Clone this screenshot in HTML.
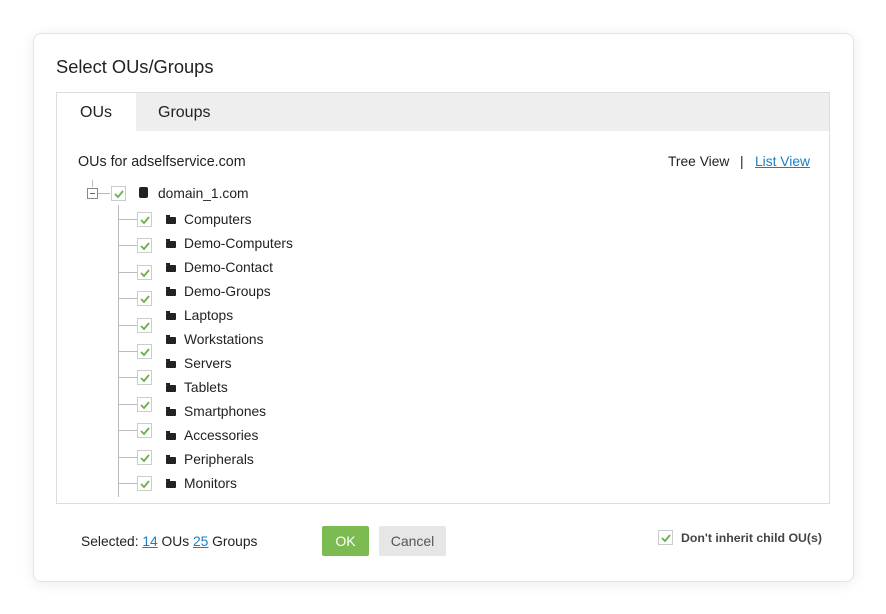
<!DOCTYPE html>
<html><head><meta charset="utf-8"><style>
body{margin:0;width:886px;height:614px;background:#fff;font-family:"Liberation Sans",sans-serif;color:#222;position:relative;overflow:hidden}
.card{position:absolute;left:33px;top:33px;width:819px;height:547px;border:1px solid #e4e4e4;border-radius:8px;box-shadow:0 2px 14px rgba(0,0,0,.08);background:#fff}
.a{position:absolute}
.cb{position:absolute;width:13px;height:13px;border:1px solid #ccc;background:#fff}
.cb svg{position:absolute;left:1px;top:1px}
.t{position:absolute;font-size:13.8px;line-height:16px;white-space:nowrap}
.f{position:absolute;width:10px;height:7px;background:#222;border-radius:1px}
.f:before{content:"";position:absolute;left:0;top:-2px;width:4px;height:2px;background:#222}
.h{position:absolute;height:1px;background:#bbb}
</style></head><body>
<div class="card"></div>
<div class="t" style="left:56px;top:57px;font-size:18.3px;line-height:20px">Select OUs/Groups</div>
<div class="a" style="left:56px;top:92px;width:772px;height:410px;border:1px solid #ddd"></div>
<div class="a" style="left:57px;top:93px;width:772px;height:38px;background:#eeeeef"></div>
<div class="a" style="left:57px;top:93px;width:79px;height:39px;background:#fff"></div>
<div class="t" style="left:80px;top:104px;font-size:16px;line-height:18px">OUs</div>
<div class="t" style="left:158px;top:104px;font-size:16px;line-height:18px">Groups</div>
<div class="t" style="left:78px;top:154px;font-size:14.3px">OUs for adselfservice.com</div>
<div class="t" style="left:668px;top:154px">Tree View</div>
<div class="t" style="left:740px;top:154px">|</div>
<div class="t" style="left:755px;top:154px;color:#1a7fc1;text-decoration:underline">List View</div>
<div class="a" style="left:92px;top:180px;width:1px;height:7px;background:#bbb"></div>
<div class="a" style="left:87px;top:188px;width:9px;height:9px;border:1px solid #888;background:#fff"><div style="position:absolute;left:2px;top:4px;width:5px;height:1px;background:#666"></div></div>
<div class="h" style="left:98px;top:193px;width:12px"></div>
<div class="cb" style="left:111px;top:186px"><svg width="11" height="11"><path d="M2 6l3 3 5-6" stroke="#6ab04c" stroke-width="1.8" fill="none"/></svg></div>
<div class="a" style="left:139px;top:187px;width:9px;height:11px;background:#222;border-radius:2px"></div>
<div class="t" style="left:158px;top:186px">domain_1.com</div>
<div class="a" style="left:118px;top:205px;width:1px;height:292px;background:#bbb"></div>
<div id="k"></div>
<script>
var n=["Computers","Demo-Computers","Demo-Contact","Demo-Groups","Laptops","Workstations","Servers","Tablets","Smartphones","Accessories","Peripherals","Monitors"],h="";
for(var i=0;i<12;i++){var y=212+24*i;
h+='<div class="f" style="left:166px;top:'+(y+5)+'px"></div><div class="t" style="left:184px;top:'+y+'px">'+n[i]+'</div>';}
for(var j=0;j<11;j++){var c=219+26.4*j;
h+='<div class="h" style="left:118px;top:'+Math.round(c)+'px;width:19px"></div>'+
'<div class="cb" style="left:137px;top:'+Math.round(c-7)+'px"><svg width="11" height="11"><path d="M2 6l3 3 5-6" stroke="#6ab04c" stroke-width="1.8" fill="none"/></svg></div>';}
document.getElementById("k").innerHTML=h;
</script>
<div class="t" style="left:81px;top:534px;font-size:13.8px">Selected: <span style="color:#1a7fc1;text-decoration:underline">14</span> OUs <span style="color:#1a7fc1;text-decoration:underline">25</span> Groups</div>
<div class="a" style="left:322px;top:526px;width:47px;height:30px;background:#7cbb52;border-radius:2px;color:#fff;font-size:14px;line-height:30px;text-align:center">OK</div>
<div class="a" style="left:379px;top:526px;width:67px;height:30px;background:#e6e6e6;border-radius:2px;color:#555;font-size:14px;line-height:30px;text-align:center">Cancel</div>
<div class="cb" style="left:658px;top:530px"><svg width="11" height="11"><path d="M2 6l3 3 5-6" stroke="#6ab04c" stroke-width="1.8" fill="none"/></svg></div>
<div class="t" style="left:681px;top:530px;font-size:12.3px;font-weight:bold;color:#444">Don't inherit child OU(s)</div>
</body></html>
